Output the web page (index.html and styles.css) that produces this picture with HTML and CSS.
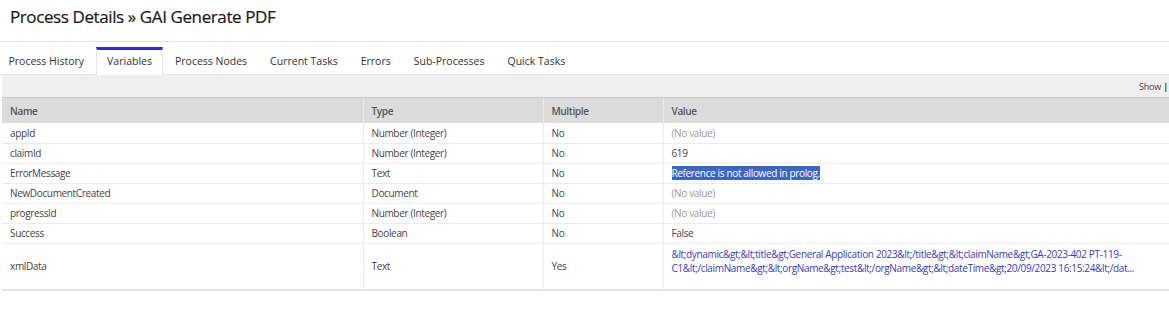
FILE: index.html
```html
<!DOCTYPE html>
<html lang="en">
<head>
    <meta charset="UTF-8">
    <title>Process Details</title>
    <link rel="stylesheet" href="styles.css">
</head>
<body>

<div class="page">
    <h1 class="title">Process Details &raquo; GAI Generate PDF</h1>

    <ul class="tabs">
        <li><a href="#">Process History</a></li>
        <li class="active"><a href="#">Variables</a></li>
        <li><a href="#">Process Nodes</a></li>
        <li><a href="#">Current Tasks</a></li>
        <li><a href="#">Errors</a></li>
        <li><a href="#">Sub-Processes</a></li>
        <li><a href="#">Quick Tasks</a></li>
    </ul>

    <div class="grid">
        <div class="toolbar">Show <span class="pipe">|</span></div>
        <table>
            <colgroup>
                <col class="col-name">
                <col class="col-type">
                <col class="col-multi">
                <col class="col-value">
            </colgroup>
            <thead>
                <tr>
                    <th>Name</th>
                    <th>Type</th>
                    <th>Multiple</th>
                    <th>Value</th>
                </tr>
            </thead>
            <tbody>
                <tr>
                    <td>appId</td>
                    <td>Number (Integer)</td>
                    <td>No</td>
                    <td class="empty">(No value)</td>
                </tr>
                <tr>
                    <td>claimId</td>
                    <td>Number (Integer)</td>
                    <td>No</td>
                    <td>619</td>
                </tr>
                <tr>
                    <td>ErrorMessage</td>
                    <td>Text</td>
                    <td>No</td>
                    <td><span class="selected">Reference is not allowed in prolog.</span></td>
                </tr>
                <tr>
                    <td>NewDocumentCreated</td>
                    <td>Document</td>
                    <td>No</td>
                    <td class="empty">(No value)</td>
                </tr>
                <tr>
                    <td>progressId</td>
                    <td>Number (Integer)</td>
                    <td>No</td>
                    <td class="empty">(No value)</td>
                </tr>
                <tr>
                    <td>Success</td>
                    <td>Boolean</td>
                    <td>No</td>
                    <td>False</td>
                </tr>
                <tr class="tall">
                    <td>xmlData</td>
                    <td>Text</td>
                    <td>Yes</td>
                    <td class="xml"><a href="#">&amp;lt;dynamic&amp;gt;&amp;lt;title&amp;gt;General Application 2023&amp;lt;/title&amp;gt;&amp;lt;claimName&amp;gt;GA-2023-402 PT-119-C1&amp;lt;/claimName&amp;gt;&amp;lt;orgName&amp;gt;test&amp;lt;/orgName&amp;gt;&amp;lt;dateTime&amp;gt;20/09/2023 16:15:24&amp;lt;/dat...</a></td>
                </tr>
            </tbody>
        </table>
    </div>
</div>

</body>
</html>
```

FILE: styles.css
```css
* {
    box-sizing: border-box;
    margin: 0;
    padding: 0;
}

html, body {
    overflow: hidden;
}

body {
    font-family: 'Open Sans', 'Liberation Sans', sans-serif;
    background-color: white;
    color: #333;
}

.page {
    width: 1169px;
}

.title {
    height: 42px;
    padding: 5px 0 0 10px;
    font-size: 17px;
    font-weight: 400;
    letter-spacing: -0.4px;
    color: #1a1a1a;
    -webkit-text-stroke: 0.2px #1a1a1a;
    border-bottom: 1px solid #ddd;
}

.tabs {
    list-style-type: none;
    display: flex;
    height: 33px;
    padding-top: 5px;
    margin-left: -3px;
    border-bottom: 1px solid #e6e6e6;
}

.tabs li {
    margin-bottom: -1px;
}

.tabs li a {
    display: block;
    height: 28px;
    padding: 4px 11.5px 0;
    font-size: 10.5px;
    color: #333;
    text-decoration: none;
    border-top: 3px solid transparent;
}

.tabs li.active a {
    background: #fff;
    border-top-color: #2b2bcf;
    border-left: 1px solid #e6e6e6;
    border-right: 1px solid #e6e6e6;
    padding: 4px 10.5px 0;
}

.grid {
    margin-left: 2px;
    border-bottom: 2px solid #e4e4e4;
}

.toolbar {
    height: 23px;
    padding: 5px 1px 0 0;
    background-color: #efefef;
    border-bottom: 1px solid #c9c9c9;
    font-size: 9px;
    letter-spacing: -0.2px;
    color: #444;
    text-align: right;
}

.toolbar .pipe {
    color: #333;
    font-weight: 700;
}

table {
    width: 100%;
    border-collapse: collapse;
    table-layout: fixed;
    font-size: 10px;
    letter-spacing: -0.35px;
}

.col-name { width: 361px; }
.col-type { width: 180px; }
.col-multi { width: 120px; }

th {
    height: 25px;
    background-color: #dcdcdc;
    color: #555;
    font-weight: 600;
    text-align: left;
    padding: 0 8px;
    border-left: 1px solid #eaeaea;
}

td {
    height: 20px;
    padding: 0 8px;
    border-bottom: 1px solid #ececec;
    border-left: 1px solid #ececec;
    color: #444;
}

th:first-child,
td:first-child {
    border-left: none;
}

td.empty {
    color: #9a9a9a;
}

.selected {
    background-color: #3a66c4;
    color: #fff;
}

tr.tall td {
    height: 46px;
    border-bottom: none;
}

td.xml {
    vertical-align: top;
    padding-top: 3px;
    line-height: 14px;
}

td.xml a {
    color: #3a3ac8;
    text-decoration: none;
}
```
